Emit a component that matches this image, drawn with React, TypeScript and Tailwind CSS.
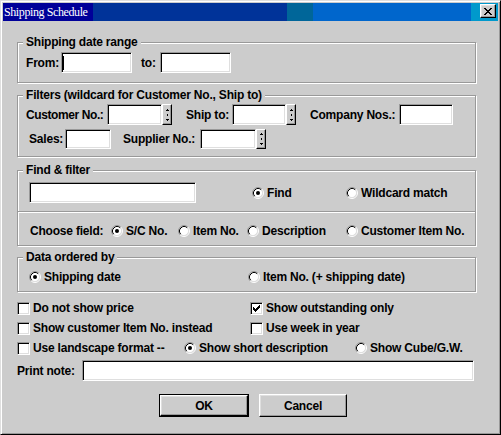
import React from "react";

function Field({ className = "", caret = false }: { className?: string; caret?: boolean }) {
  return (
    <div
      className={
        "flex items-center bg-white border border-t-[#999] border-l-[#999] border-b-white border-r-white shadow-[inset_1px_1px_0_#000,inset_-1px_-1px_0_#dfdfdf] " +
        className
      }
    >
      {caret && <span className="ml-[1px] h-[14px] w-[1px] bg-black" />}
    </div>
  );
}

function Spinner({ className = "" }: { className?: string }) {
  return (
    <div
      className={
        "flex w-[10px] items-center justify-center bg-[#cccccc] border border-t-white border-l-white border-r-black border-b-black shadow-[inset_-1px_-1px_0_#999] " +
        className
      }
    >
      <svg width="5" height="12" viewBox="0 0 5 12" shapeRendering="crispEdges">
        <path d="M2 0h1v1h-1z M1 1h3v1h-3z M2 5h1v2h-1z M1 10h3v1h-3z M2 11h1v1h-1z" fill="#000" />
      </svg>
    </div>
  );
}

function RadioIcon({ checked }: { checked?: boolean }) {
  return (
    <svg width="12" height="12" viewBox="0 0 12 12" className="shrink-0">
      <circle cx="6" cy="6" r="4.5" fill="#fff" />
      <path d="M2.11 9.89 A5.5 5.5 0 0 1 9.89 2.11" stroke="#999" fill="none" />
      <path d="M9.89 2.11 A5.5 5.5 0 0 1 2.11 9.89" stroke="#fff" fill="none" />
      <path d="M2.82 9.18 A4.5 4.5 0 0 1 9.18 2.82" stroke="#000" fill="none" />
      <path d="M9.18 2.82 A4.5 4.5 0 0 1 2.82 9.18" stroke="#dfdfdf" fill="none" />
      {checked && <circle cx="6" cy="6" r="2" fill="#000" />}
    </svg>
  );
}

function Radio({ label, checked, className = "" }: { label: string; checked?: boolean; className?: string }) {
  return (
    <div className={"flex items-center gap-[3px] whitespace-nowrap " + className}>
      <RadioIcon checked={checked} />
      <span>{label}</span>
    </div>
  );
}

function Check({ label, checked, className = "" }: { label: string; checked?: boolean; className?: string }) {
  return (
    <div className={"flex items-center gap-[3px] whitespace-nowrap " + className}>
      <div className="flex h-[13px] w-[13px] shrink-0 items-center justify-center bg-white border border-t-[#999] border-l-[#999] border-b-white border-r-white shadow-[inset_1px_1px_0_#000,inset_-1px_-1px_0_#dfdfdf]">
        {checked && (
          <svg width="7" height="7" viewBox="0 0 7 7" shapeRendering="crispEdges">
            <path
              d="M6 0h1v1h-1z M5 1h2v1h-2z M0 2h1v1h-1z M4 2h3v1h-3z M0 3h2v1h-2z M3 3h3v1h-3z M0 4h5v1h-5z M1 5h3v1h-3z M2 6h1v1h-1z"
              fill="#000"
            />
          </svg>
        )}
      </div>
      <span>{label}</span>
    </div>
  );
}

function Group({ label, className = "", children }: { label: string; className?: string; children: React.ReactNode }) {
  return (
    <div
      className={
        "relative w-[459px] border border-[#999] shadow-[1px_1px_0_#fff,inset_1px_1px_0_#fff] px-[8px] " + className
      }
    >
      <span className="absolute top-[-8px] left-[5px] bg-[#cccccc] px-[3px] leading-[14px] whitespace-nowrap">
        {label}
      </span>
      {children}
    </div>
  );
}

export default function App() {
  return (
    <div className="w-[501px] h-[435px] overflow-hidden border border-t-[#dfdfdf] border-l-[#dfdfdf] border-r-black border-b-black bg-[#cccccc] shadow-[inset_1px_1px_0_#fff,inset_-1px_-1px_0_#999] p-[2px] font-['Liberation_Sans',Arial,sans-serif] text-[12px] font-bold leading-[14px] tracking-[-0.2px] text-black">
      {/* Title bar */}
      <div className="flex h-[18px] w-[495px]">
        <div className="flex w-[90px] items-center overflow-visible bg-[#000099] pl-[1px] font-['Liberation_Serif','Times_New_Roman',serif] text-[12px] font-normal tracking-[-0.4px] text-white whitespace-nowrap">
          Shipping Schedule
        </div>
        <div className="w-[194px] bg-[#003399]" />
        <div className="w-[26px] bg-[#006699]" />
        <div className="w-[158px] bg-[#0066cc]" />
        <div className="flex flex-1 items-start bg-[#0099cc] pl-[9px] pt-[1px]">
          <div className="flex h-[14px] w-[16px] items-start bg-[#cccccc] border border-t-white border-l-white border-r-black border-b-black shadow-[inset_-1px_-1px_0_#999,inset_1px_1px_0_#dfdfdf] pl-[3px] pt-[3px]">
            <svg width="8" height="7" viewBox="0 0 8 7" shapeRendering="crispEdges">
              <path
                d="M0 0h2v1h-2z M6 0h2v1h-2z M1 1h2v1h-2z M5 1h2v1h-2z M2 2h4v1h-4z M3 3h2v1h-2z M2 4h4v1h-4z M1 5h2v1h-2z M5 5h2v1h-2z M0 6h2v1h-2z M6 6h2v1h-2z"
                fill="#000"
              />
            </svg>
          </div>
        </div>
      </div>

      {/* Body */}
      <div className="flex flex-col pl-[14px]">
        <Group label="Shipping date range" className="mt-[21px] pt-[9px] pb-[9px]">
          <div className="flex h-[21px] items-center">
            <span className="w-[35px]">From:</span>
            <Field className="w-[71px] h-[21px]" caret />
            <span className="ml-[9px] w-[19px]">to:</span>
            <Field className="w-[71px] h-[21px]" />
          </div>
        </Group>

        <Group label="Filters (wildcard for Customer No., Ship to)" className="mt-[12px] pt-[8px] pb-[7px]">
          <div className="flex h-[21px] items-center">
            <span className="w-[81px] whitespace-nowrap tracking-[-0.4px]">Customer No.:</span>
            <Field className="w-[55px] h-[21px]" />
            <Spinner className="h-[21px]" />
            <span className="ml-[14px] w-[46px] whitespace-nowrap">Ship to:</span>
            <Field className="w-[54px] h-[21px]" />
            <Spinner className="h-[21px]" />
            <span className="ml-[14px] w-[89px] whitespace-nowrap">Company Nos.:</span>
            <Field className="w-[54px] h-[21px]" />
          </div>
          <div className="mt-[4px] flex h-[20px] items-center">
            <span className="ml-[3px] w-[36px]">Sales:</span>
            <Field className="w-[46px] h-[20px]" />
            <span className="ml-[12px] w-[77px] whitespace-nowrap">Supplier No.:</span>
            <Field className="w-[56px] h-[20px]" />
            <Spinner className="h-[20px]" />
          </div>
        </Group>

        <Group label="Find & filter" className="mt-[13px] pt-[11px] pb-[5px]">
          <div className="flex h-[21px] items-center">
            <Field className="ml-[3px] w-[167px] h-[21px]" />
            <Radio label="Find" checked className="ml-[56px] w-[94px]" />
            <Radio label="Wildcard match" />
          </div>
          <div className="mx-[-8px] mt-[8px]">
            <div className="h-[1px] bg-[#999]" />
            <div className="h-[1px] bg-white" />
          </div>
          <div className="mt-[9px] flex h-[18px] items-center">
            <span className="ml-[4px] w-[81px] whitespace-nowrap">Choose field:</span>
            <Radio label="S/C No." checked className="w-[67px]" />
            <Radio label="Item No." className="w-[69px]" />
            <Radio label="Description" className="w-[99px]" />
            <Radio label="Customer Item No." />
          </div>
        </Group>

        <Group label="Data ordered by" className="mt-[11px] pt-[10px] pb-[5px]">
          <div className="flex h-[18px] items-center">
            <Radio label="Shipping date" checked className="ml-[3px] w-[219px]" />
            <Radio label="Item No. (+ shipping date)" />
          </div>
        </Group>

        <div className="mt-[6px] flex flex-col">
          <div className="flex h-[20px] items-center">
            <Check label="Do not show price" className="w-[233px]" />
            <Check label="Show outstanding only" checked />
          </div>
          <div className="flex h-[20px] items-center">
            <Check label="Show customer Item No. instead" className="w-[233px]" />
            <Check label="Use week in year" />
          </div>
          <div className="flex h-[20px] items-center">
            <Check label="Use landscape format --" className="w-[167px]" />
            <Radio label="Show short description" checked className="w-[171px]" />
            <Radio label="Show Cube/G.W." />
          </div>
        </div>

        <div className="mt-[2px] flex h-[21px] items-center">
          <span className="w-[65px] whitespace-nowrap">Print note:</span>
          <Field className="w-[392px] h-[21px]" />
        </div>

        <div className="mt-[13px] flex">
          <div className="ml-[142px] h-[23px] w-[90px] border border-black">
            <div className="flex h-full w-full items-center justify-center border border-t-white border-l-white border-r-black border-b-black shadow-[inset_-1px_-1px_0_#999,inset_1px_1px_0_#dfdfdf]">
              OK
            </div>
          </div>
          <div className="ml-[10px] flex h-[23px] w-[88px] items-center justify-center border border-t-white border-l-white border-r-black border-b-black shadow-[inset_-1px_-1px_0_#999,inset_1px_1px_0_#dfdfdf]">
            Cancel
          </div>
        </div>
      </div>
    </div>
  );
}
